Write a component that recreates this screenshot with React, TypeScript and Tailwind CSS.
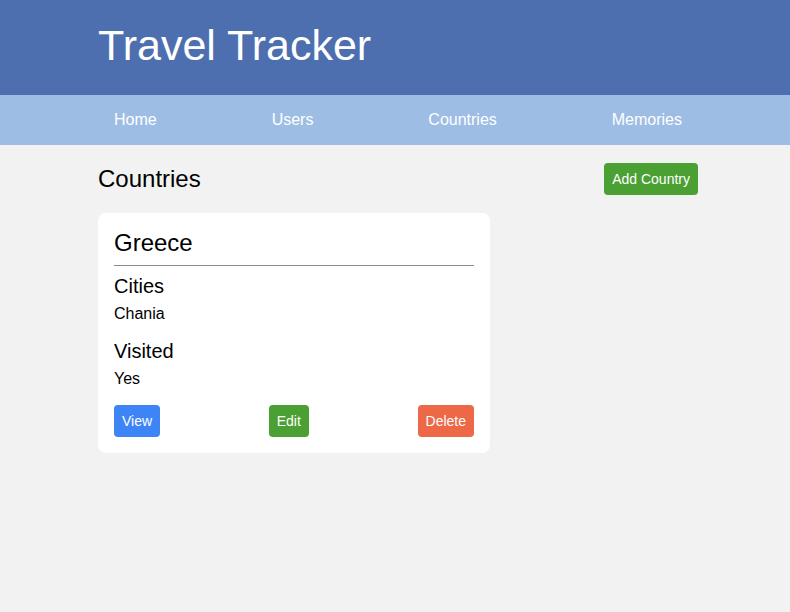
import React from "react";

const navItems = ["Home", "Users", "Countries", "Memories"];

function Header() {
    return (
        <header className="bg-[#4d6fb0] h-[95px]">
            <div className="w-[606px] mx-auto pl-[6px] pt-[24px]">
                <h1 className="text-white text-[43px] leading-[43px]">
                    Travel Tracker
                </h1>
            </div>
        </header>
    );
}

function Nav() {
    return (
        <nav className="bg-[#9dbde4] h-[50px]">
            <div className="w-[606px] mx-auto pl-[6px] h-full">
                <ul className="h-full px-4 flex items-center justify-between">
                    {navItems.map((item) => (
                        <li key={item} className="text-white text-base">
                            {item}
                        </li>
                    ))}
                </ul>
            </div>
        </nav>
    );
}

function CountryCard() {
    return (
        <div className="bg-white rounded-lg w-[392px] p-4">
            <h2 className="text-2xl leading-7">Greece</h2>
            <hr className="mt-2 border-t border-[#8c8c8c]" />
            <h3 className="mt-2 text-xl leading-6">Cities</h3>
            <p className="mt-1 text-base leading-6">Chania</p>
            <h3 className="mt-[13px] text-xl leading-6">Visited</h3>
            <p className="mt-1 text-base leading-6">Yes</p>
            <div className="mt-[14px] flex items-center justify-between">
                <button className="h-8 px-2 rounded bg-[#3d85f6] text-white text-sm">
                    View
                </button>
                <button className="h-8 px-2 rounded bg-[#4aa032] text-white text-sm">
                    Edit
                </button>
                <button className="h-8 px-2 rounded bg-[#ec6846] text-white text-sm">
                    Delete
                </button>
            </div>
        </div>
    );
}

export default function App() {
    return (
        <div
            className="min-h-[612px] bg-[#f2f2f2] text-black"
            style={{ fontFamily: '"Liberation Sans", Arial, sans-serif' }}
        >
            <Header />
            <Nav />
            <main className="w-[606px] mx-auto pl-[6px] pt-[18px]">
                <div className="flex items-center justify-between">
                    <h2 className="text-2xl">Countries</h2>
                    <button className="h-8 px-2 rounded bg-[#4aa032] text-white text-sm">
                        Add Country
                    </button>
                </div>
                <div className="mt-[18px]">
                    <CountryCard />
                </div>
            </main>
        </div>
    );
}
